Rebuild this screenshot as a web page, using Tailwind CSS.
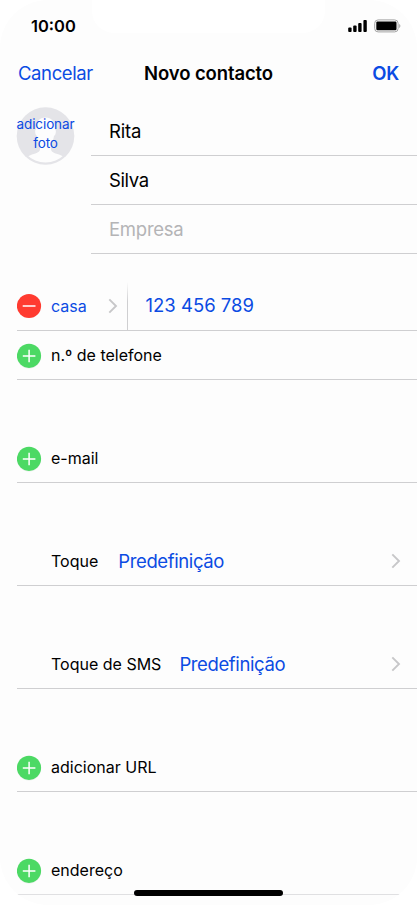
<!DOCTYPE html>
<html lang="pt">
<head>
<meta charset="utf-8">
<title>Novo contacto</title>
<script src="https://cdn.jsdelivr.net/npm/@tailwindcss/browser@4"></script>
</head>
<body class="bg-white font-['Inter','Liberation_Sans',sans-serif] text-black">
<svg class="hidden">
  <symbol id="plus" viewBox="0 0 25 26"><circle cx="12" cy="13.6" r="12" fill="#e6eee8"/><circle cx="12" cy="12.8" r="12.1" fill="#4cd964"/><path d="M5.800 13h12.6M12.100 6.7v12.6" stroke="#fff" stroke-width="1.5"/></symbol>
  <symbol id="minus" viewBox="0 0 25 26"><circle cx="12" cy="13" r="12.1" fill="#ff3b30"/><path d="M5.700 13h12.8" stroke="#fff" stroke-width="1.5"/></symbol>
  <symbol id="chev" viewBox="0 0 10 16"><path d="M1.3 1.3L8 8l-6.700 6.700" fill="none" stroke="#c7c7c9" stroke-width="1.9"/></symbol>
</svg>
<div class="relative h-[905px] w-[417px] overflow-hidden rounded-[48px] bg-[#fdfdfd]">
  <div class="absolute left-[92px] top-0 h-[33px] w-[233px] rounded-b-[22px] bg-white"></div>
  <header class="relative">
    <div class="flex h-[51px] items-center justify-between pl-[31px] pr-[16px]">
      <span class="pt-px text-[16.5px] leading-[21px] font-semibold">10:00</span>
      <div class="flex items-center gap-[6px]">
        <svg class="h-[12px] w-[20px]" viewBox="0 0 20 12"><rect x=".2" y="7.5" width="3.4" height="4.5" rx=".9"/><rect x="5.2" y="5.5" width="3.4" height="6.500" rx=".9"/><rect x="10.2" y="3" width="3.4" height="9" rx=".9"/><rect x="15.400" y="0" width="3.4" height="12" rx=".9"/></svg>
        <svg class="h-[14px] w-[27px]" viewBox="0 0 27 14"><rect x=".7" y=".9" width="23.4" height="12" rx="3.4" fill="none" stroke="#a3a3a3"/><rect x="2.300" y="2.5" width="20.2" height="8.8" rx="1.2"/><path d="M25.2 5v4c1.600-.5 1.600-3.500 0-4z" fill="#a3a3a3"/></svg>
      </div>
    </div>
    <nav class="grid h-[56px] grid-cols-[1fr_auto_1fr] pl-[18px] pr-[18px] pt-[10px] text-[18.5px] leading-[24px]">
      <span class="text-[#0b4be3]"><span class="tracking-[-0.4px]">Cancelar</span></span>
      <span class="font-semibold tracking-[-0.12px]">Novo contacto</span>
      <span class="text-right font-semibold tracking-[-0.3px] text-[#0b4be3]">OK</span>
    </nav>
  </header>
  <main>
    <section class="relative flex">
      <div class="w-[91px] pl-[16px]">
        <div class="relative h-[58px] w-[59px]">
          <svg class="h-[58px] w-[59px]" viewBox="0 0 59 58"><defs><clipPath id="av"><circle cx="29.5" cy="29" r="26.500"/></clipPath></defs><circle cx="29.5" cy="29" r="28.800" fill="#e4e4e8"/><g clip-path="url(#av)" fill="#fdfdfd"><path d="M29.5 10.500c-6.500 0-9.800 4.500-9.500 11.500-1.500 1-1 6 1 7 .5 3 1.500 5.500 3 7v6c0 3-3 4-8 5.500-4 1.500-7 3-9 5V60h45v-7.500c-2-2-5-3.500-9-5-5-1.500-8-2.500-8-5.500v-6c1.500-1.500 2.500-4 3-7 2-1 2.500-6 1-7 .3-7-3-11.500-9.500-11.500z"/></g></svg>
          <span class="absolute inset-x-[-4px] top-[8px] text-center text-[13.5px] leading-[19px] tracking-[-0.1px] text-[#0b4be3]">adicionar<br>foto</span>
        </div>
      </div>
      <div class="flex-1 text-[18.5px]">
        <div class="flex h-[49px] items-center border-b border-[#cfcfd1] pt-[2px] pl-[18px] tracking-[-0.2px]">Rita</div>
        <div class="flex h-[49px] items-center border-b border-[#cfcfd1] pt-[2px] pl-[18px] tracking-[-0.4px]">Silva</div>
        <div class="flex h-[49px] items-center border-b border-[#cfcfd1] pt-[2px] pl-[18px] tracking-[-0.25px] text-[#b4b4b6]">Empresa</div>
      </div>
    </section>
    <section class="mt-[28px] pl-[17px] text-[16px]">
      <div class="flex h-[49px] items-center border-b border-[#cfcfd1]">
        <svg class="h-[26px] w-[25px]"><use href="#minus"/></svg>
        <span class="ml-[9px] w-[57px] text-[#0b4be3]">casa</span>
        <svg class="h-[16px] w-[10px]"><use href="#chev"/></svg>
        <span class="ml-[9px] h-[48px] w-px bg-linear-to-b from-[#fdfdfd] to-[#cfcfd1] to-40%"></span>
        <span class="ml-[17.5px] pb-px text-[18.5px] tracking-[0px] text-[#0b4be3]">123 456 789</span>
      </div>
      <div class="flex h-[49px] items-center border-b border-[#cfcfd1]">
        <svg class="mt-px h-[26px] w-[25px]"><use href="#plus"/></svg>
        <span class="ml-[9px]">n.º de telefone</span>
      </div>
      <div class="mt-[54px] flex h-[49px] items-center border-b border-[#cfcfd1]">
        <svg class="mt-px h-[26px] w-[25px]"><use href="#plus"/></svg>
        <span class="ml-[9px]">e-mail</span>
      </div>
      <div class="mt-[54px] flex h-[49px] items-center border-b border-[#cfcfd1] pl-[34px] pr-[16px]">
        <span>Toque</span>
        <span class="ml-[20px] pt-[2px] text-[18.5px] tracking-[-0.38px] text-[#0b4be3]">Predefinição</span>
        <svg class="ml-auto h-[16px] w-[10px]"><use href="#chev"/></svg>
      </div>
      <div class="mt-[54px] flex h-[49px] items-center border-b border-[#cfcfd1] pl-[34px] pr-[16px]">
        <span>Toque de SMS</span>
        <span class="ml-[18px] pt-[2px] text-[18.5px] tracking-[-0.38px] text-[#0b4be3]">Predefinição</span>
        <svg class="ml-auto h-[16px] w-[10px]"><use href="#chev"/></svg>
      </div>
      <div class="mt-[54px] flex h-[49px] items-center border-b border-[#cfcfd1]">
        <svg class="mt-px h-[26px] w-[25px]"><use href="#plus"/></svg>
        <span class="ml-[9px]">adicionar URL</span>
      </div>
      <div class="mt-[54px] mr-[16px] flex h-[49px] items-center border-b border-[#e0e0e2]">
        <svg class="mt-px h-[26px] w-[25px]"><use href="#plus"/></svg>
        <span class="ml-[9px]">endereço</span>
      </div>
    </section>
  </main>
  <div class="absolute left-[134px] top-[890px] h-[6px] w-[149px] rounded-full bg-black"></div>
</div>
</body>
</html>
